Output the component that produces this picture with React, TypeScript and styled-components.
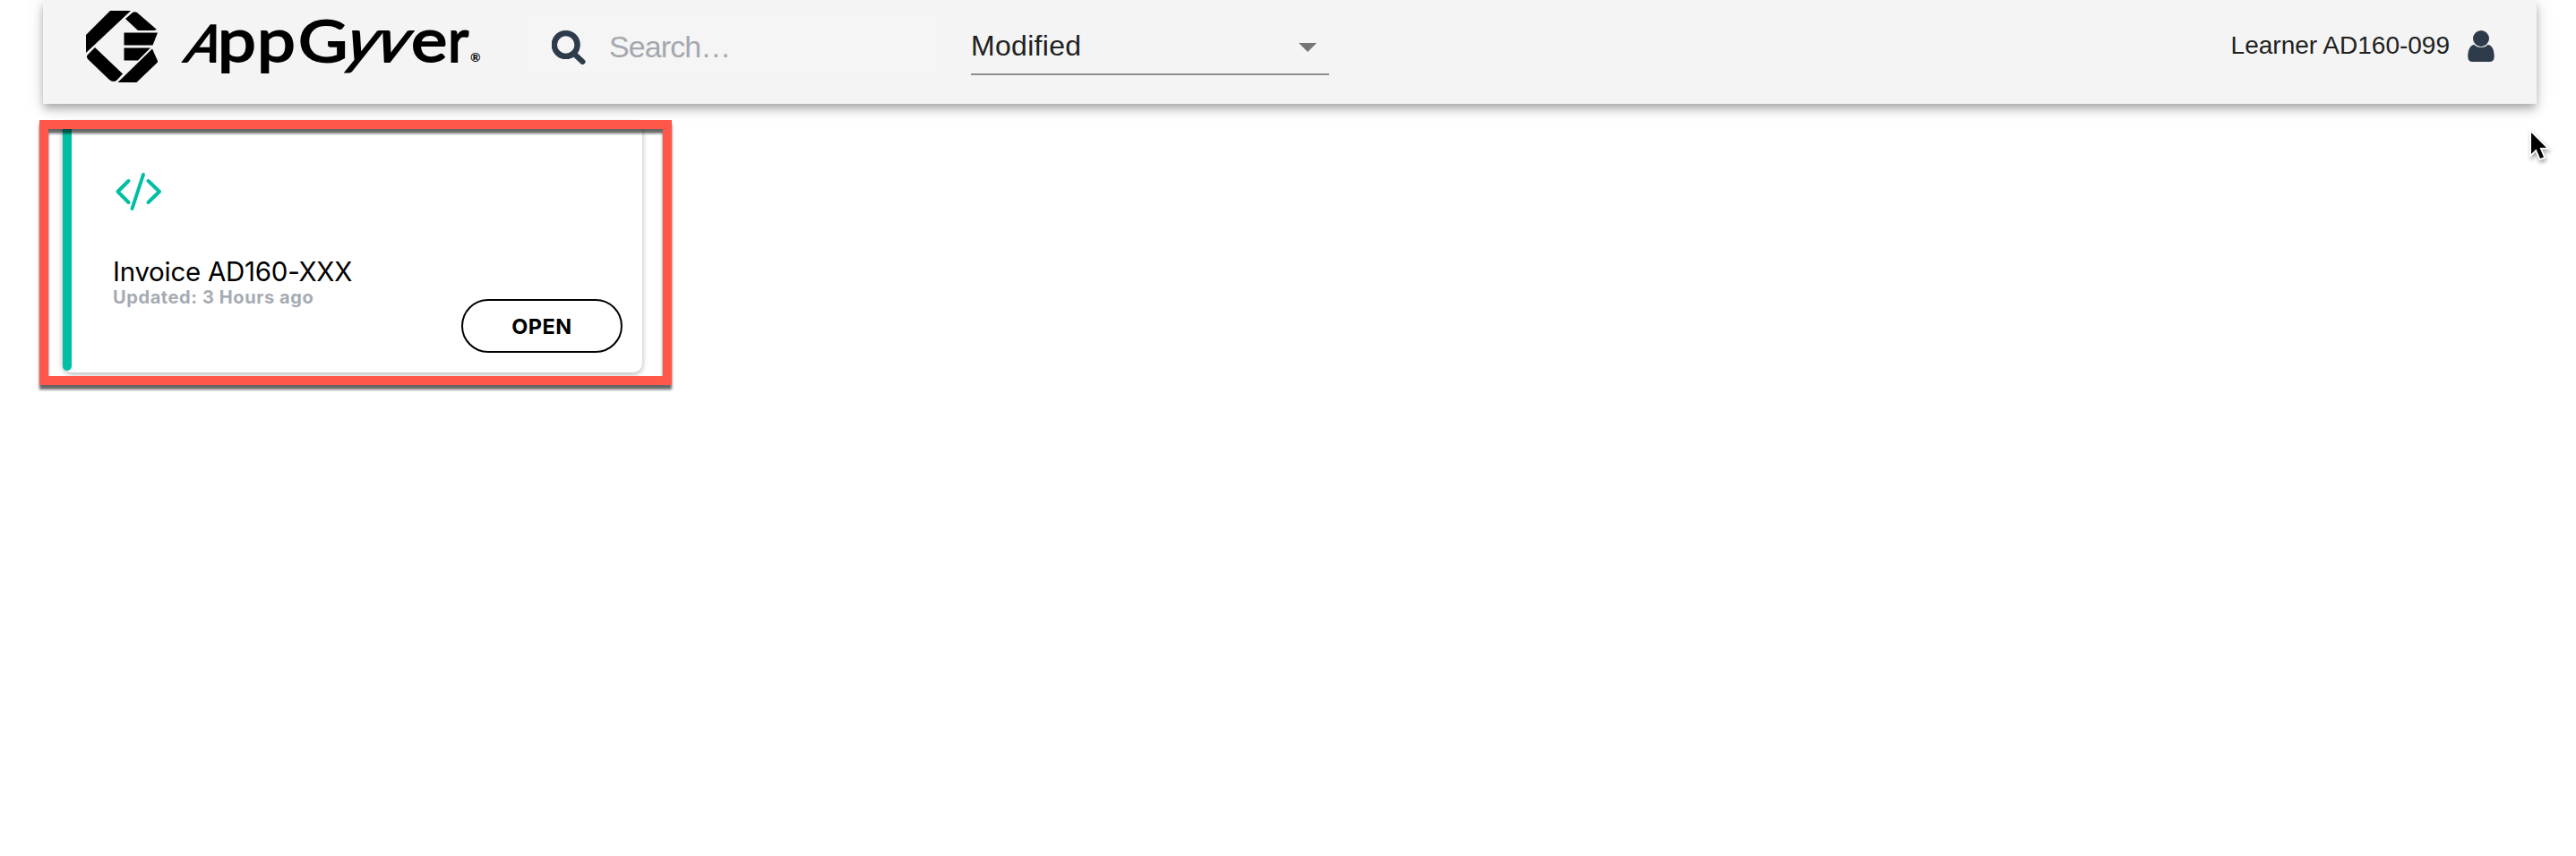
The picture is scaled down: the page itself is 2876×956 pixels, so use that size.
import React from "react";
import styled, { createGlobalStyle } from "styled-components";

const GlobalStyle = createGlobalStyle`
  * { box-sizing: border-box; }
  body { margin: 0; background: #fff; overflow: hidden; }
`;

const helvetica = `"Liberation Sans", Arial, sans-serif`;
const system = `Inter, "Liberation Sans", sans-serif`;

const Page = styled.div`
  position: relative;
  height: 956px;
  padding: 0 44px 0 48px;
  background: #fff;
  font-family: ${helvetica};
`;

const Header = styled.header`
  display: flex;
  align-items: flex-start;
  height: 116px;
  padding-left: 48px;
  padding-right: 47px;
  background: #f4f4f4;
  box-shadow: 0 4px 8px -2px rgba(0, 0, 0, 0.2), 0 8px 10px rgba(0, 0, 0, 0.14),
    0 2px 20px rgba(0, 0, 0, 0.12);
`;

const Brand = styled.div`
  display: flex;
  width: 488px;
  padding-top: 12px;
`;

const Wordmark = styled.div`
  display: flex;
  align-items: baseline;
  height: 80px;
  margin-left: 27px;
  margin-top: -3px;
  font: 400 67px/68px Lato, sans-serif;
  -webkit-text-stroke: 2px #000;
  color: #000;
`;

const Glyph = styled.span<{ $w: number; $sx: number; $skew?: number; $dx?: number; $size?: number }>`
  display: block;
  flex: none;
  width: ${(p) => p.$w}px;
  font-size: ${(p) => p.$size ?? 67}px;
  transform-origin: 0 58px;
  transform: translateX(${(p) => p.$dx ?? 0}px) skewX(${(p) => p.$skew ?? 0}deg) scaleX(${(p) => p.$sx});
`;

const Registered = styled.span`
  font: 700 14px/16px Lato, sans-serif;
  -webkit-text-stroke: 0;
`;

const SearchBox = styled.label`
  display: flex;
  width: 468px;
  height: 70px;
  margin-top: 17px;
  padding: 17px 0 0 32px;
  border-radius: 8px;
  background: #f5f5f5;
`;

const SearchText = styled.span`
  margin: -2px 0 0 26px;
  font-size: 34px;
  line-height: 40px;
  color: #a3a8ae;
  letter-spacing: -0.9px;
`;

const Select = styled.div`
  display: flex;
  justify-content: space-between;
  width: 400px;
  height: 84px;
  margin-left: 32px;
  padding: 32px 14px 0 0;
  border-bottom: 2px solid #8e8e8e;
  font-size: 32px;
  line-height: 38px;
  letter-spacing: 0.3px;
  color: #212121;
`;

const Caret = styled.svg`
  margin-top: 16px;
`;

const Account = styled.div`
  display: flex;
  align-items: flex-start;
  margin-left: auto;
  padding-top: 34px;
  font-size: 28px;
  line-height: 34px;
  color: #212121;
`;

const AccountName = styled.span`
  margin-right: 20px;
`;

const Main = styled.main`
  padding: 20px 0 0 22px;
`;

const Card = styled.article`
  display: flex;
  width: 647px;
  height: 280px;
  border-radius: 10px;
  background: #fff;
  box-shadow: 0 2px 6px rgba(0, 0, 0, 0.3);
`;

const Accent = styled.div`
  width: 10px;
  height: 278px;
  border-radius: 5px;
  background: #00bfa5;
`;

const CardBody = styled.div`
  display: flex;
  flex: 1;
  flex-direction: column;
  padding: 54px 22px 0 46px;
  font-family: ${system};
`;

const CodeIcon = styled.svg`
  margin-left: 1px;
`;

const Title = styled.h2`
  margin: 47px 0 0;
  font-size: 29.5px;
  font-weight: 400;
  line-height: 36px;
  color: #000;
  letter-spacing: -0.27px;
`;

const Updated = styled.p`
  margin: 1px 0 0;
  font-size: 20px;
  font-weight: 700;
  line-height: 20px;
  color: #a5abb3;
  letter-spacing: 0.6px;
`;

const OpenButton = styled.button`
  align-self: flex-end;
  width: 180px;
  height: 60px;
  margin-top: -8px;
  padding: 1px 0 0;
  border: 2px solid #000;
  border-radius: 30px;
  background: #fff;
  font: 700 23.5px/28px ${system};
  letter-spacing: 0.5px;
  color: #000;
`;

const Highlight = styled.div`
  position: absolute;
  left: 44px;
  top: 134px;
  width: 706px;
  height: 296px;
  border: 10px solid #ff584a;
  filter: drop-shadow(0 5px 1.5px rgba(0, 0, 0, 0.6));
`;

const Cursor = styled.svg`
  position: absolute;
  left: 2820px;
  top: 140px;
  filter: drop-shadow(1px 3px 2px rgba(0, 0, 0, 0.35));
`;

export default function App() {
  return (
    <Page>
      <GlobalStyle />
      <Header>
        <Brand>
          <svg width="80" height="80" viewBox="0 0 80 80" aria-hidden="true">
            <path d="M27 0H50L0 47V27Z" />
            <path d="M44 9 52 2Q54 .5 57 2L79 21 76 22H58Z" />
            <path d="M42.5 24.5H80L74.5 38.5H42.5Z" />
            <path d="M42.5 41.5H72L58 55.5H42.5Z" />
            <path d="M74 42.5 80.5 57 56.5 80H35.5Z" />
            <path d="M10 41 41 70.5 34 78Q30 80.5 26 77L2 54Q0 51 2 49Z" />
          </svg>
          <Wordmark>
            <Glyph $w={42} $sx={0.95} $skew={-21} $size={57}>A</Glyph>
            <Glyph $w={44} $sx={1.14} $dx={-2}>p</Glyph>
            <Glyph $w={45} $sx={1.14} $dx={-2}>p</Glyph>
            <Glyph $w={50} $sx={1.2} $dx={-1} $size={63}>G</Glyph>
            <Glyph $w={43} $sx={1} $skew={-20} $dx={-2}>y</Glyph>
            <Glyph $w={34} $sx={1} $skew={-20} $dx={-11}>v</Glyph>
            <Glyph $w={42} $sx={1.14} $dx={-2}>e</Glyph>
            <Glyph $w={22} $sx={0.95} $dx={-3}>r</Glyph>
            <Registered>®</Registered>
          </Wordmark>
        </Brand>
        <SearchBox>
          <svg width="38" height="38" viewBox="0 0 38 38" fill="none" stroke="#2d3b4b">
            <circle cx="15.7" cy="16" r="12.9" strokeWidth="6.4" />
            <path d="M26 27 34.5 35" strokeWidth="6" strokeLinecap="round" />
          </svg>
          <SearchText>Search…</SearchText>
        </SearchBox>
        <Select>
          <span>Modified</span>
          <Caret width="20" height="10" viewBox="0 0 20 10" fill="#757575">
            <path d="M0 0H20L10 10Z" />
          </Caret>
        </Select>
        <Account>
          <AccountName>Learner AD160-099</AccountName>
          <svg width="30" height="35" viewBox="0 0 30 35" fill="#2d3b4b">
            <circle cx="15" cy="9" r="9" />
            <path d="M7.5 16C11 19.8 19 19.8 22.5 16 27 16.4 29.7 21 29.7 29Q29.7 35 24.5 35H5.5Q.3 35 .3 29C.3 21 3 16.4 7.5 16Z" />
          </svg>
        </Account>
      </Header>
      <Main>
        <Card>
          <Accent />
          <CardBody>
            <CodeIcon
              width="54"
              height="48"
              viewBox="0 0 54 48"
              fill="none"
              stroke="#00bfa5"
              strokeWidth="4"
              strokeLinecap="round"
              strokeLinejoin="round"
            >
              <path d="M16.5 12 4.5 24 16.5 36M38.5 12 51 24 38.5 36M33 5 20.5 43" />
            </CodeIcon>
            <Title>Invoice AD160-XXX</Title>
            <Updated>Updated: 3 Hours ago</Updated>
            <OpenButton>OPEN</OpenButton>
          </CardBody>
        </Card>
      </Main>
      <Highlight />
      <Cursor width="32" height="44" viewBox="0 0 32 44">
        <path
          d="M6 8V32L11.5 26.5 16 37 20 35.5 15.5 25H23Z"
          fill="#000"
          stroke="#fff"
          strokeWidth="3.5"
          paintOrder="stroke"
        />
      </Cursor>
    </Page>
  );
}
